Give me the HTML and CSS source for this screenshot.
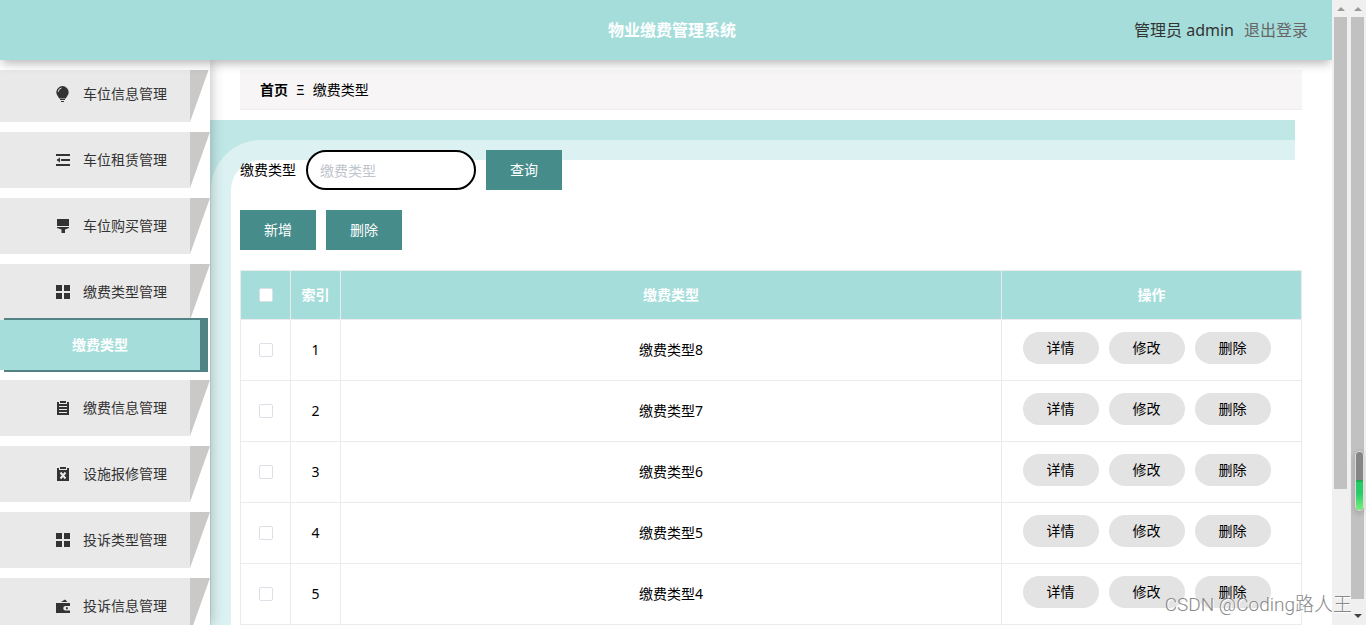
FILE: index.html
```html
<!DOCTYPE html>
<html lang="zh-CN">
<head>
<meta charset="utf-8">
<title>物业缴费管理系统</title>
<link rel="stylesheet" href="styles.css">
</head>
<body>
<div class="window">
  <div class="app">
    <header class="header">
      <h1 class="header-title">物业缴费管理系统</h1>
      <div class="header-user"><span>管理员 admin</span><a class="logout" href="#">退出登录</a></div>
    </header>
    <div class="body">
      <nav class="sidebar">
        <ul class="menu">
          <li><a class="menu-item" href="#"><svg class="icon" viewBox="0 0 14 16"><path d="M6.500 0A6.300 6.300 0 0 0 .3 6.300C.3 9 2.200 10.300 3.200 12.500h6.600c1-2.200 2.900-3.500 2.900-6.200A6.300 6.300 0 0 0 6.500 0zM4 13h5v1H4zM5 15h3v1H5z"/><path class="icon-line" d="M2.300 5.800A4 4 0 0 1 5.500 2"/></svg><span>车位信息管理</span></a></li>
          <li><a class="menu-item" href="#"><svg class="icon" viewBox="0 0 14 16"><path d="M0 2h14v2H0zM5 7h9v2H5zM0 12h14v2H0zM4 5.500v5L.5 8z"/></svg><span>车位租赁管理</span></a></li>
          <li><a class="menu-item" href="#"><svg class="icon" viewBox="0 0 14 16"><path d="M1 1h12v7H1zM1 9h12v1L9 11.500V15H5.500v-3.500L1 10z"/></svg><span>车位购买管理</span></a></li>
          <li><a class="menu-item" href="#"><svg class="icon" viewBox="0 0 14 16"><path d="M0 1h6v6H0zM8 1h6v6H8zM0 9h6v6H0zM8 9h6v6H8z"/></svg><span>缴费类型管理</span></a>
            <a class="submenu-item" href="#">缴费类型</a></li>
          <li><a class="menu-item" href="#"><svg class="icon" viewBox="0 0 14 16"><path d="M1 2h2v2h8V2h2v13H1zM4 1h6v2H4z"/><path class="icon-line" d="M3 6.500h8M3 9.500h8M3 12.500h8"/></svg><span>缴费信息管理</span></a></li>
          <li><a class="menu-item" href="#"><svg class="icon" viewBox="0 0 14 16"><path d="M1 2h2v2h8V2h2v13H1zM4 1h6v2H4z"/><path class="icon-line icon-cross" d="M4.500 6.500l5 6M9.500 6.500l-5 6"/></svg><span>设施报修管理</span></a></li>
          <li><a class="menu-item" href="#"><svg class="icon" viewBox="0 0 14 16"><path d="M0 1h6v6H0zM8 1h6v6H8zM0 9h6v6H0zM8 9h6v6H8z"/></svg><span>投诉类型管理</span></a></li>
          <li><a class="menu-item" href="#"><svg class="icon" viewBox="0 0 14 16"><path d="M0 5h14v3h-4.500a2.200 2.200 0 0 0 0 4.500H14V15H0zM5 4l4-2.500L11.500 4zM10 9.200h1.800v2H10z"/></svg><span>投诉信息管理</span></a></li>
        </ul>
      </nav>
      <main class="main">
        <div class="breadcrumb"><b>首页</b><span>Ξ</span><span>缴费类型</span></div>
        <div class="panel">
          <div class="frame"><div class="frame-middle"><div class="frame-inner"></div></div></div>
          <div class="content">
            <form class="search">
              <label for="type">缴费类型</label>
              <input class="search-input" id="type" type="text" placeholder="缴费类型">
              <button class="button" type="button">查询</button>
            </form>
            <div class="actions"><button class="button" type="button">新增</button><button class="button" type="button">删除</button></div>
            <table class="table">
              <thead><tr><th class="col-small"><input class="check" type="checkbox" aria-label="全选"></th><th class="col-small">索引</th><th>缴费类型</th><th class="col-actions">操作</th></tr></thead>
              <tbody>
                <tr><td><input class="check" type="checkbox" aria-label="选择 1"></td><td>1</td><td>缴费类型8</td><td><div class="row-actions"><button class="pill" type="button">详情</button><button class="pill" type="button">修改</button><button class="pill" type="button">删除</button></div></td></tr>
                <tr><td><input class="check" type="checkbox" aria-label="选择 2"></td><td>2</td><td>缴费类型7</td><td><div class="row-actions"><button class="pill" type="button">详情</button><button class="pill" type="button">修改</button><button class="pill" type="button">删除</button></div></td></tr>
                <tr><td><input class="check" type="checkbox" aria-label="选择 3"></td><td>3</td><td>缴费类型6</td><td><div class="row-actions"><button class="pill" type="button">详情</button><button class="pill" type="button">修改</button><button class="pill" type="button">删除</button></div></td></tr>
                <tr><td><input class="check" type="checkbox" aria-label="选择 4"></td><td>4</td><td>缴费类型5</td><td><div class="row-actions"><button class="pill" type="button">详情</button><button class="pill" type="button">修改</button><button class="pill" type="button">删除</button></div></td></tr>
                <tr><td><input class="check" type="checkbox" aria-label="选择 5"></td><td>5</td><td>缴费类型4</td><td><div class="row-actions"><button class="pill" type="button">详情</button><button class="pill" type="button">修改</button><button class="pill" type="button">删除</button></div></td></tr>
              </tbody>
            </table>
          </div>
        </div>
      </main>
    </div>
  </div>
  <div class="scrollbar"><div class="arrow-up"></div><div class="thumb thumb-short"></div></div>
  <div class="scrollbar"><div class="arrow-up"></div><div class="thumb"></div><div class="arrow-down"></div></div>
  <div class="meter"><div class="meter-fill"></div></div>
  <div class="watermark">CSDN @Coding路人王</div>
</div>
</body>
</html>
```

FILE: styles.css
```css
* { box-sizing: border-box; }
body { margin: 0; font: 14px/20px "Noto Sans", "Noto Sans CJK SC", sans-serif; color: #000; background: #fff; }
a { color: inherit; text-decoration: none; }
button, input { font: inherit; margin: 0; }
.window { position: relative; display: flex; height: 100vh; overflow: hidden; }
.app { flex: 1; min-width: 0; display: flex; flex-direction: column; overflow: hidden; }

.header { position: relative; z-index: 3; flex: none; display: grid; grid-template-columns: 1fr auto 1fr; align-items: center; height: 60px; padding: 0 24px 0 36px; background: #a5dddb; box-shadow: 0 5px 10px -2px rgba(0, 0, 0, .3); font-size: 16px; }
.header-title { grid-column: 2; margin: 0; font-size: 16px; color: #fff; }
.header-user { display: flex; justify-content: flex-end; gap: 10px; color: #333; white-space: nowrap; }
.logout { color: #666; }

.body { flex: 1; min-height: 0; display: flex; }
.sidebar { position: relative; z-index: 2; flex: none; width: 210px; padding-top: 10px; background: #fff; box-shadow: 1px 0 12px rgba(0, 0, 0, .25); display: flex; }
.menu { flex: 1; overflow: hidden; list-style: none; margin: 0; padding: 0; }
.menu li { margin-bottom: 10px; }
.menu li:first-child { margin-top: -4px; }
.menu-item { position: relative; display: flex; align-items: center; gap: 13px; height: 56px; margin-right: 20px; padding-left: 56px; background: #e9e9e9; color: #333; }
.menu-item::after { content: ""; position: absolute; left: 100%; top: 0; width: 20px; height: 100%; background: #cac9c8; clip-path: polygon(0 0, 100% 0, 0 100%); }
.icon { width: 14px; height: 16px; fill: #333; }
.icon-line { fill: none; stroke: #e9e9e9; stroke-width: 1; }
.icon-cross { stroke-width: 2; }
.submenu-item { position: relative; display: flex; align-items: center; justify-content: center; height: 50px; margin-right: 10px; background: #a5dddb; box-shadow: 6px 0 0 2px #528384; color: #fff; font-weight: bold; }

.main { flex: 1; min-width: 0; padding-top: 10px; display: flex; flex-direction: column; gap: 10px; overflow: hidden; }
.breadcrumb { flex: none; display: flex; align-items: center; gap: 8px; height: 40px; margin: 0 30px; padding: 0 20px; background: #f8f5f6; border-bottom: 1px solid #eee; }
.panel { flex: 1; display: grid; }
.frame, .content { grid-area: 1 / 1; }
.frame { display: grid; margin-right: 37px; padding: 20px 0 0 1px; background: #bfe7e6; }
.frame-middle { display: grid; padding: 20px 0 0 20px; border-top-left-radius: 50px; background: #dcf2f2; }
.frame-inner { border-top-left-radius: 30px; background: #fff; }
.content { position: relative; padding: 30px 30px 0; }
.search, .actions { display: flex; align-items: center; gap: 10px; margin-bottom: 20px; }
.search-input { width: 170px; height: 40px; padding: 0 12px; border: 2px solid #000; border-radius: 20px; background: #fff; }
.search-input::placeholder { color: #c0c4cc; }
.button { width: 76px; height: 40px; padding: 0; border: 0; background: #468c8b; color: #fff; }

.table { width: 100%; table-layout: fixed; border-collapse: collapse; text-align: center; background: #fff; }
.table th, .table td { border: 1px solid #ebebeb; padding: 0; }
.table th { height: 49px; background: #a5dddb; color: #fff; }
.table td { height: 61px; }
.col-small { width: 50px; }
.col-actions { width: 300px; }
.check { appearance: none; display: block; width: 14px; height: 14px; margin: 0 auto; border: 1px solid #dcdfe6; border-radius: 2px; background: #fff; }
.row-actions { display: flex; justify-content: center; gap: 10px; padding: 0 10px 4px 0; }
.pill { width: 76px; height: 32px; padding: 0; border: 0; border-radius: 16px; background: #e3e3e3; color: #000; }

.scrollbar { flex: none; display: flex; flex-direction: column; width: 17px; padding: 0 2px; background: #f0f0f0; }
.arrow-up, .arrow-down { flex: none; display: flex; align-items: center; justify-content: center; height: 17px; }
.arrow-up::before { content: ""; border: 4px solid transparent; border-top: 0; border-bottom-color: #999; }
.arrow-down { height: 26px; padding-top: 8px; }
.arrow-down::before { content: ""; border: 4px solid transparent; border-bottom: 0; border-top-color: #444; }
.thumb { flex: 1; width: 13px; background: #c1c1c1; }
.thumb-short { flex: 0 0 78%; max-height: 472px; }
.meter { position: absolute; z-index: 4; right: 2px; top: 451px; width: 9px; height: 60px; padding-top: 28px; border: 1px solid #ddd; border-radius: 4px; background: #858585; box-shadow: 0 2px 6px rgba(0, 0, 0, .2); }
.meter-fill { height: 30px; border-top: 2px solid #1fae55; border-radius: 0 0 3px 3px; background: linear-gradient(#27cb68 40%, #78f07b); }
.watermark { position: absolute; z-index: 5; right: 14px; bottom: 6px; font: 19px/28px Roboto, "Noto Sans CJK SC", sans-serif; font-weight: 300; color: #888; text-shadow: 1px 1px 0 #fff; white-space: nowrap; }
```
